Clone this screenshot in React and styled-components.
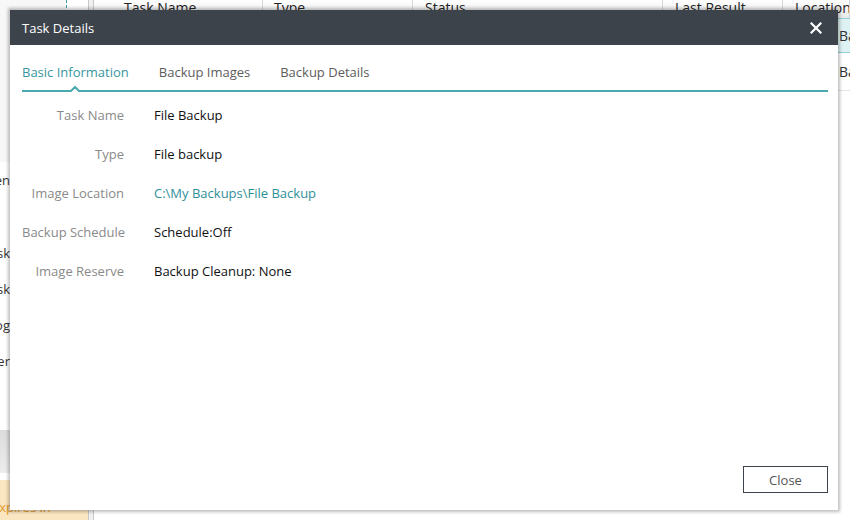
import React from "react";
import styled, { createGlobalStyle } from "styled-components";

const GlobalStyle = createGlobalStyle`
  html, body {
    margin: 0;
    padding: 0;
    background: #ffffff;
    font-family: "Open Sans", "Noto Sans", sans-serif;
  }
  #root {
    width: 850px;
    height: 520px;
    overflow: hidden;
    position: relative;
  }
`;

const AppShell = styled.div`
  display: flex;
  width: 850px;
  height: 520px;
  background: #f4f4f4;
`;

const Sidebar = styled.div`
  width: 88px;
  display: flex;
  flex-direction: column;
  background: #ffffff;
  border-right: 1px solid #c8c8c8;
  font-size: 13px;
  color: #333;
`;

const Divider = styled.div`
  width: 4px;
  background: #f0f0f0;
  border-right: 1px solid #c8c8c8;
`;

const SideTop = styled.div`
  height: 162px;
  background: linear-gradient(90deg, #f7f7f7 66px, transparent 66px);
  border-right: 1px dashed #3aa0a8;
  width: 66px;
`;

const SideItem = styled.div`
  height: 36px;
  margin-top: ${(p) => p.mt || 0}px;
  display: flex;
  align-items: center;
  justify-content: flex-end;
  padding-right: 78px;
  white-space: nowrap;
`;

const SideSpacer = styled.div`
  flex: 1;
`;

const SideBand = styled.div`
  height: 43px;
  background: linear-gradient(#dcdcdc, #ededed);
  margin-bottom: 7px;
`;

const Expires = styled.div`
  height: 40px;
  background: #fbe6c2;
  color: #e39a2b;
  display: flex;
  align-items: flex-end;
  padding-bottom: 4px;
  box-sizing: border-box;
  font-size: 13px;
  text-indent: -8px;
  white-space: nowrap;
  overflow: hidden;
`;

const Main = styled.div`
  flex: 1;
  display: flex;
  flex-direction: column;
  background: #ffffff;
`;

const columns = "169px 150px 250px 120px 1fr";

const HeadRow = styled.div`
  display: grid;
  grid-template-columns: ${columns};
  height: 18px;
  background: linear-gradient(#ffffff, #e9e9e9);
  border-bottom: 1px solid #8fcfd3;
`;

const HeadCell = styled.div`
  padding: 0 0 0 ${(p) => p.pad || 12}px;
  border-right: 1px solid #d6d6d6;
  font-size: 14px;
  color: #222;
  line-height: 16px;
  white-space: nowrap;
  overflow: hidden;
`;

const DataRow = styled.div`
  display: grid;
  grid-template-columns: ${columns};
  height: ${(p) => (p.selected ? 33 : 37)}px;
  align-items: center;
  font-size: 14px;
  color: #333;
  background: ${(p) => (p.selected ? "#dff2f3" : "#ffffff")};
  border-bottom: 1px solid ${(p) => (p.selected ? "#8fcfd3" : "#e4e4e4")};
`;

const DataCell = styled.div`
  padding-left: ${(p) => p.pad || 12}px;
  white-space: nowrap;
  overflow: hidden;
`;

const Overlay = styled.div`
  position: absolute;
  left: 10px;
  top: 10px;
  width: 828px;
  height: 500px;
  background: #ffffff;
  display: flex;
  flex-direction: column;
  box-shadow: 0 0 3px 2px rgba(0, 0, 0, 0.25);
`;

const TitleBar = styled.div`
  height: 35px;
  background: #3d434b;
  color: #ffffff;
  display: flex;
  align-items: center;
  justify-content: space-between;
  padding: 0 16px 0 12px;
  font-size: 13px;
`;

const CloseX = styled.button`
  border: none;
  background: none;
  padding: 0;
  width: 12px;
  height: 12px;
  display: flex;
  cursor: pointer;
`;

const Body = styled.div`
  flex: 1;
  display: flex;
  flex-direction: column;
  padding: 13px 10px 17px 12px;
`;

const Tabs = styled.div`
  display: flex;
  gap: 30px;
  height: 34px;
  box-sizing: border-box;
  padding-bottom: 5px;
  border-bottom: 2px solid #4aa9ae;
`;

const Tab = styled.div`
  font-size: 13px;
  color: ${(p) => (p.active ? "#3796a0" : "#5c5c5c")};
  cursor: pointer;
  position: relative;
  display: flex;
  align-items: center;
`;

const Notch = styled.svg`
  position: absolute;
  left: 50%;
  bottom: -7px;
  margin-left: -8px;
  width: 16px;
  height: 7px;
`;

const InfoList = styled.div`
  display: flex;
  flex-direction: column;
  padding-top: 3px;
`;

const InfoRow = styled.div`
  display: grid;
  grid-template-columns: 102px 1fr;
  column-gap: 30px;
  height: 39px;
  align-items: center;
  font-size: 13px;
`;

const Label = styled.div`
  text-align: right;
  color: #8a8a8a;
  white-space: nowrap;
`;

const Value = styled.div`
  color: ${(p) => (p.link ? "#2f8f98" : "#111111")};
  white-space: nowrap;
`;

const Footer = styled.div`
  margin-top: auto;
  display: flex;
  justify-content: flex-end;
`;

const Button = styled.button`
  width: 85px;
  height: 27px;
  border: 1px solid #3d434b;
  background: #ffffff;
  color: #555;
  font-family: inherit;
  font-size: 13px;
  padding: 0;
  cursor: pointer;
`;

const rows = [
  { label: "Task Name", value: "File Backup" },
  { label: "Type", value: "File backup" },
  { label: "Image Location", value: "C:\\My Backups\\File Backup", link: true },
  { label: "Backup Schedule", value: "Schedule:Off" },
  { label: "Image Reserve", value: "Backup Cleanup: None" },
];

export default function App() {
  return (
    <>
      <GlobalStyle />
      <AppShell>
        <Sidebar>
          <SideTop />
          <SideItem>Open</SideItem>
          <SideItem mt={37}>Task</SideItem>
          <SideItem>Task</SideItem>
          <SideItem>Log</SideItem>
          <SideItem>Other</SideItem>
          <SideSpacer />
          <SideBand />
          <Expires>Expires in</Expires>
        </Sidebar>
        <Divider />
        <Main>
          <HeadRow>
            <HeadCell pad={30}>Task Name</HeadCell>
            <HeadCell pad={11}>Type</HeadCell>
            <HeadCell>Status</HeadCell>
            <HeadCell>Last Result</HeadCell>
            <HeadCell>Location</HeadCell>
          </HeadRow>
          <DataRow selected>
            <DataCell />
            <DataCell />
            <DataCell />
            <DataCell />
            <DataCell pad={56}>Backups</DataCell>
          </DataRow>
          <DataRow>
            <DataCell />
            <DataCell />
            <DataCell />
            <DataCell />
            <DataCell pad={56}>Backups</DataCell>
          </DataRow>
        </Main>
      </AppShell>

      <Overlay>
        <TitleBar>
          <span>Task Details</span>
          <CloseX aria-label="close">
            <svg width="12" height="12" viewBox="0 0 12 12">
              <path d="M1.5 1.5 L10.5 10.5 M10.5 1.5 L1.5 10.5" stroke="#ffffff" strokeWidth="2.2" strokeLinecap="square" />
            </svg>
          </CloseX>
        </TitleBar>
        <Body>
          <Tabs>
            <Tab active>
              Basic Information
              <Notch viewBox="0 0 16 7">
                <path d="M0 6 L4 6 L8 2 L12 6 L16 6 L16 7 L0 7 Z" fill="#ffffff" />
                <path d="M0 6 L4 6 L8 2 L12 6 L16 6" fill="none" stroke="#4aa9ae" strokeWidth="2" />
              </Notch>
            </Tab>
            <Tab>Backup Images</Tab>
            <Tab>Backup Details</Tab>
          </Tabs>
          <InfoList>
            {rows.map((r) => (
              <InfoRow key={r.label}>
                <Label>{r.label}</Label>
                <Value link={r.link}>{r.value}</Value>
              </InfoRow>
            ))}
          </InfoList>
          <Footer>
            <Button>Close</Button>
          </Footer>
        </Body>
      </Overlay>
    </>
  );
}
